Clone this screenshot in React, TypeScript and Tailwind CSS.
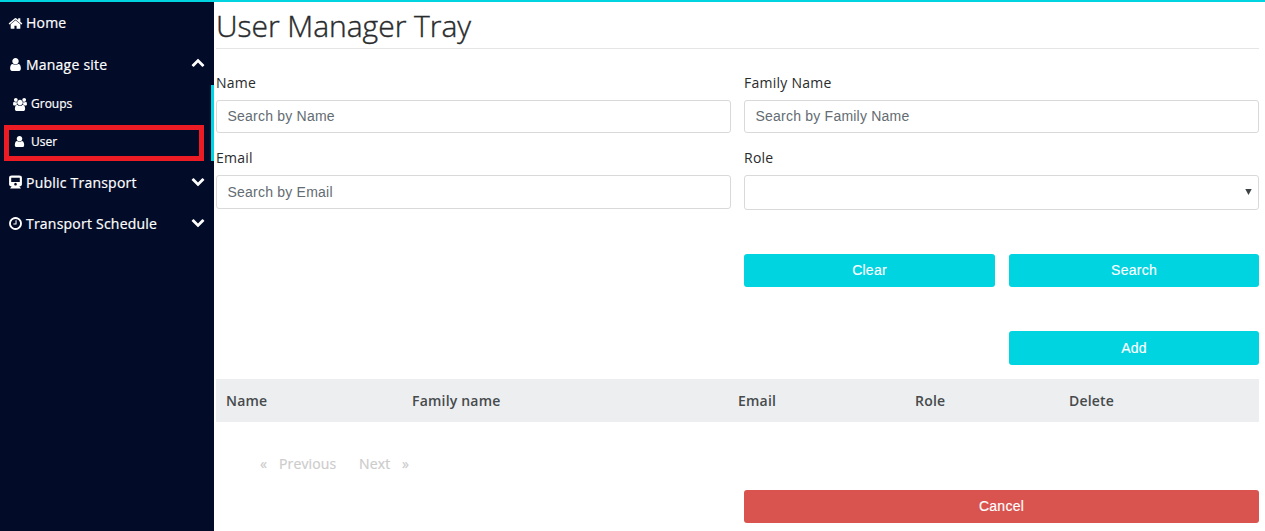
import React from "react";

const paths = {
  home: "M1472 992v480q0 26-19 45t-45 19h-384v-384h-256v384h-384q-26 0-45-19t-19-45v-480q0-1 .5-3t.5-3l575-474 575 474q1 2 1 6zm223-69l-62 74q-8 9-21 11h-3q-13 0-21-7l-692-577-692 577q-12 8-24 7-13-2-21-11l-62-74q-8-10-7-23.5t11-21.5l719-599q32-26 76-26t76 26l244 204v-195q0-14 9-23t23-9h192q14 0 23 9t9 23v408l219 182q10 8 11 21.5t-7 23.5z",
  user: "M1536 1399q0 109-62.5 187t-150.5 78h-854q-88 0-150.5-78t-62.5-187q0-85 8.5-160.5t31.5-152 58.5-131 94-89 134.5-34.5q131 128 313 128t313-128q76 0 134.5 34.5t94 89 58.5 131 31.5 152 8.5 160.5zm-256-887q0 159-112.5 271.5t-271.5 112.5-271.5-112.5-112.5-271.5 112.5-271.5 271.5-112.5 271.5 112.5 112.5 271.5z",
  clock: "M1024 544v448q0 14-9 23t-23 9h-320q-14 0-23-9t-9-23v-64q0-14 9-23t23-9h224v-352q0-14 9-23t23-9h64q14 0 23 9t9 23zm416 352q0-148-73-273t-198-198-273-73-273 73-198 198-73 273 73 273 198 198 273 73 273-73 198-198 73-273zm224 0q0 209-103 385.5t-279.5 279.5-385.5 103-385.5-103-279.5-279.5-103-385.5 103-385.5 279.5-279.5 385.5-103 385.5 103 279.5 279.5 103 385.5z",
  group: "M593 896q-162 5-265 128h-134q-82 0-138-40.5t-56-118.5q0-353 124-353 6 0 43.5 21t97.5 42.5 119 21.5q67 0 133-23-5 37-5 66 0 139 81 256zm1071 637q0 120-73 189.5t-194 69.5h-874q-121 0-194-69.5t-73-189.5q0-53 3.5-103.5t14-109 26.5-108.5 43-97.5 62-81 85.5-53.5 111.5-20q10 0 43 21.5t73 48 107 48 135 21.5 135-21.5 107-48 73-48 43-21.5q61 0 111.5 20t85.5 53.5 62 81 43 97.5 26.5 108.5 14 109 3.5 103.5zm-1024-1277q0 106-75 181t-181 75-181-75-75-181 75-181 181-75 181 75 75 181zm704 384q0 159-112.5 271.5t-271.5 112.5-271.5-112.5-112.5-271.5 112.5-271.5 271.5-112.5 271.5 112.5 112.5 271.5zm576 225q0 78-56 118.5t-138 40.5h-134q-103-123-265-128 81-117 81-256 0-29-5-66 66 23 133 23 59 0 119-21.5t97.5-42.5 43.5-21q124 0 124 353zm-128-609q0 106-75 181t-181 75-181-75-75-181 75-181 181-75 181 75 75 181z",
  down: "M1683 808l-742 741q-19 19-45 19t-45-19l-742-741q-19-19-19-45.5t19-45.5l166-165q19-19 45-19t45 19l531 531 531-531q19-19 45-19t45 19l166 165q19 19 19 45.5t-19 45.5z",
  up: "M1683 1331l-166 165q-19 19-45 19t-45-19l-531-531-531 531q-19 19-45 19t-45-19l-166-165q-19-19-19-45.5t19-45.5l742-741q19-19 45-19t45 19l742 741q19 19 19 45.5t-19 45.5z",
  train: "M460 60h872q160 0 246 74t86 194v766q0 116-86 189t-226 79l170 190q16 16 8 35t-29 19h-1210q-21 0-29-19t8-35l170-190q-140-6-226-79t-86-189v-766q0-120 86-194t246-74zm436 1200q66 0 113-47t47-113-47-113-113-47-113 47-47 113 47 113 113 47zm-512-430h1024v-510h-1024z",
};

type IconName = keyof typeof paths;

function Icon({ name, className }: { name: IconName; className: string }) {
  return (
    <svg viewBox={name === "group" ? "0 0 1920 1792" : "0 0 1792 1792"} className={className} fill="currentColor" aria-hidden="true">
      <path fillRule="evenodd" d={paths[name]} />
    </svg>
  );
}

function NavItem({ icon, label, chevron, className }: { icon: IconName; label: string; chevron?: "up" | "down"; className: string }) {
  return (
    <a className={`flex items-center pl-[7.5px] pr-[9.5px] text-sm tracking-[0.22px] ${className}`}>
      <Icon name={icon} className="mr-[3.5px] size-[15px] shrink-0" />
      <span className="grow">{label}</span>
      {chevron && <Icon name={chevron} className={chevron === "up" ? "mb-1.5 size-3.5" : "mb-[3px] size-3.5"} />}
    </a>
  );
}

function Field({ label, children }: { label: string; children: React.ReactNode }) {
  return (
    <label className="flex flex-col">
      <span className="h-[26px] text-sm leading-[18px] tracking-[0.25px] text-[#292b2c]">{label}</span>
      {children}
    </label>
  );
}

const inputStyle =
  "w-full rounded-[3px] border border-[#d9d9d9] bg-white px-[10.5px] pb-px font-['Liberation_Sans',sans-serif] text-sm tracking-[0.22px] placeholder:text-[#636c72]";
const buttonStyle =
  "rounded-[3px] font-['Liberation_Sans',sans-serif] text-sm tracking-[0.25px] text-white [-webkit-text-stroke:0.15px]";

export default function App() {
  return (
    <div className="flex h-[531px] w-full flex-col overflow-hidden border-t-2 border-[#00d4e1] bg-white font-['Open_Sans',sans-serif]">
      <div className="flex grow">
        <nav className="flex w-[214px] shrink-0 flex-col bg-[#020c28] text-white [-webkit-text-stroke:0.2px]">
          <NavItem icon="home" label="Home" className="h-[42px]" />
          <NavItem icon="user" label="Manage site" chevron="up" className="h-[41px]" />
          <div className="flex h-19 flex-col border-r-3 border-[#00d4e1]">
            <a className="flex h-[38px] items-center pl-[13px] text-xs">
              <Icon name="group" className="mr-1 h-[13px] w-3.5" />
              Groups
            </a>
            <a className="ml-1 mt-0.5 flex h-9 w-50 items-center border-5 border-[#ed1c24] pb-0.5 pl-1 text-xs">
              <Icon name="user" className="mb-px mr-[5px] size-[13px]" />
              User
            </a>
          </div>
          <NavItem icon="train" label="Public Transport" chevron="down" className="mt-px h-[41px]" />
          <NavItem icon="clock" label="Transport Schedule" chevron="down" className="h-[41px]" />
        </nav>
        <main className="flex grow flex-col pl-0.5 pr-1.5">
          <h1 className="h-[47px] border-b border-[#e5e5e5] text-[30px] font-light leading-[48px] tracking-[-0.03px] text-[#292b2c] [-webkit-text-stroke:0.4px]">User Manager Tray</h1>
          <form className="mt-[25px] grid grid-cols-2 gap-x-[13px]">
            <Field label="Name"><input className={`${inputStyle} h-[33px]`} placeholder="Search by Name" /></Field>
            <Field label="Family Name"><input className={`${inputStyle} h-[33px]`} placeholder="Search by Family Name" /></Field>
            <div className="mt-4"><Field label="Email"><input className={`${inputStyle} h-[34px]`} placeholder="Search by Email" /></Field></div>
            <div className="mt-4">
              <Field label="Role">
                <span className="flex h-[35px] items-center justify-end rounded-[3px] border border-[#d9d9d9] pb-0.5 pr-[6px]">
                  <svg viewBox="0 0 7 6" className="h-1.5 w-[7px] text-[#3d4245]" fill="currentColor"><path d="M.3 0h6.4L3.5 6z" /></svg>
                </span>
              </Field>
            </div>
          </form>
          <div className="ml-[528px] mt-11 grid grid-cols-[251px_1fr] gap-x-3.5">
            <button className={`${buttonStyle} h-[33px] bg-[#00d4e1] pb-0.5`}>Clear</button>
            <button className={`${buttonStyle} h-[33px] bg-[#00d4e1] pb-0.5`}>Search</button>
            <button className={`${buttonStyle} col-start-2 mt-11 h-[34px] bg-[#00d4e1]`}>Add</button>
          </div>
          <table className="mt-3.5 w-full table-fixed">
            <thead>
              <tr className="h-[43px] bg-[#eceeef] text-left text-sm tracking-[0.2px] text-[#464a4c]">
                <th className="w-[186px] pl-2.5 font-semibold">Name</th>
                <th className="w-[326px] pl-2.5 font-semibold">Family name</th>
                <th className="w-[177px] pl-2.5 font-semibold">Email</th>
                <th className="w-[154px] pl-2.5 font-semibold">Role</th>
                <th className="pl-2.5 font-semibold">Delete</th>
              </tr>
            </thead>
          </table>
          <div className="mt-8 flex h-5 items-center pl-11 text-sm tracking-[0.15px] text-[#cccccc] [-webkit-text-stroke:0.2px]">
            <span className="w-[19px]">«</span>
            <span className="w-20">Previous</span>
            <span className="w-[43px]">Next</span>
            <span>»</span>
          </div>
          <button className={`${buttonStyle} ml-[528px] mt-4 h-[33px] bg-[#d9534f] pb-0.5`}>Cancel</button>
        </main>
      </div>
    </div>
  );
}
